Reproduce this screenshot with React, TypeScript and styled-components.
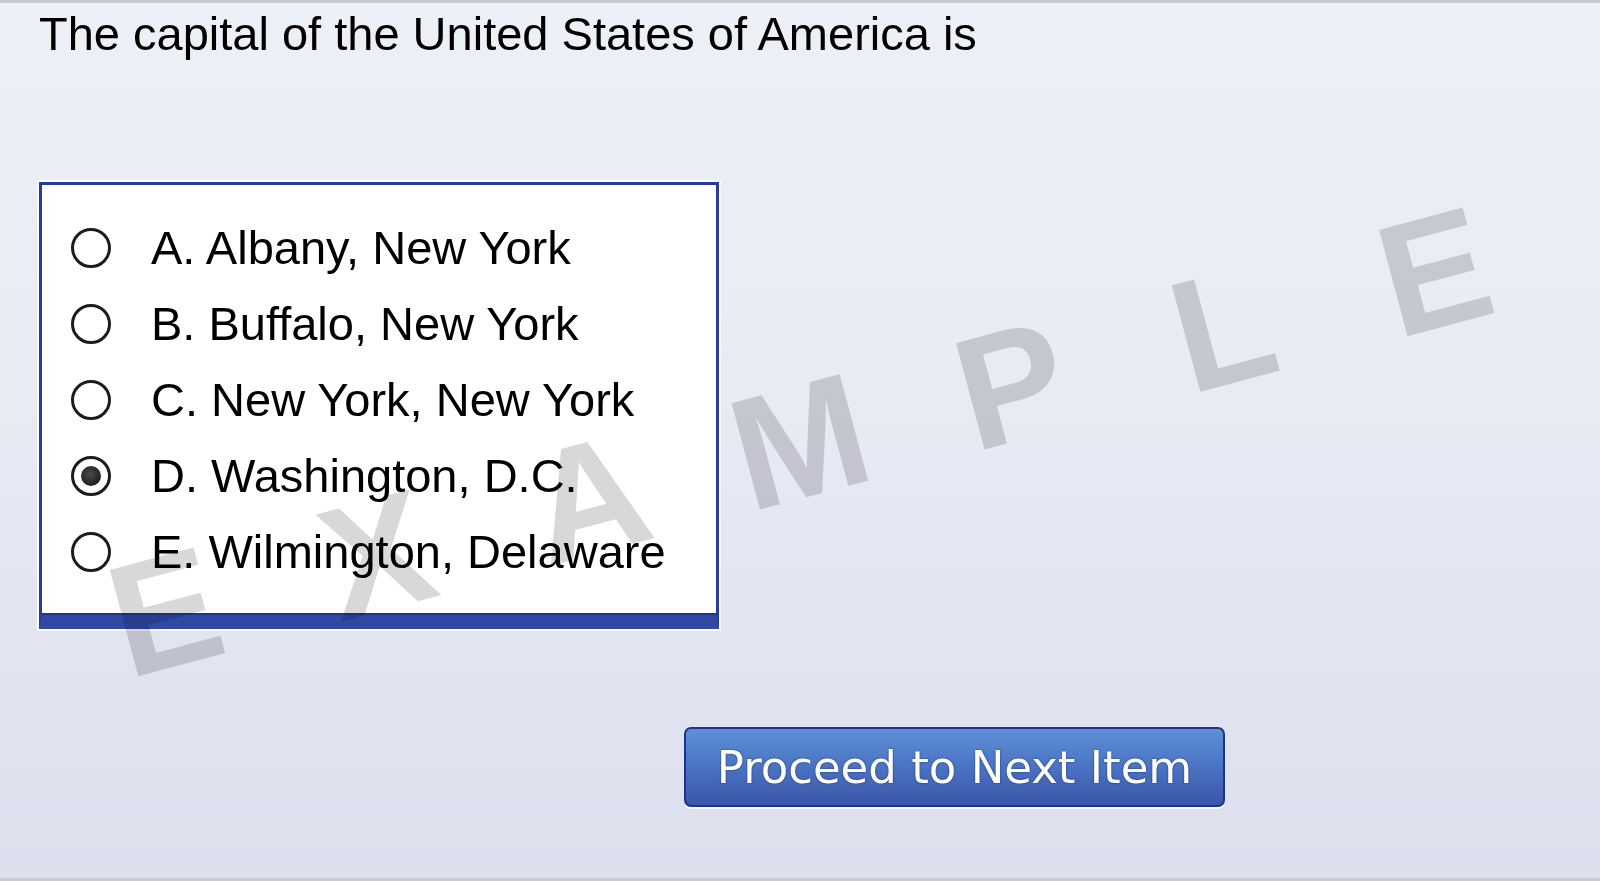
import React from "react";
import styled, { createGlobalStyle } from "styled-components";

const GlobalStyle = createGlobalStyle`
  html, body {
    margin: 0;
    padding: 0;
  }
  body {
    background: #e4e7f2;
    font-family: "Liberation Sans", Arial, sans-serif;
  }
  * { box-sizing: border-box; }
`;

const Page = styled.div`
  position: relative;
  height: 881px;
  overflow: hidden;
  border-top: 3px solid #c8c8ca;
  border-bottom: 3px solid #cbcbcf;
  background: linear-gradient(180deg, #eef0f8 0%, #e8eaf4 45%, #dcdfed 100%);
  padding: 4px 0 0 39px;
`;

const Title = styled.h1`
  margin: 0;
  font-family: "Liberation Sans", Arial, sans-serif;
  font-weight: 400;
  font-size: 47px;
  line-height: 54px;
  color: #000;
`;

const ChoiceBox = styled.div`
  margin-top: 121px;
  width: 680px;
  background: #fff;
  border: 3px solid #283a9c;
  border-bottom: 14px solid #3049a3;
  box-shadow: 0 0 0 2px rgba(255, 255, 255, 0.85), inset 0 -2px 0 #1f3590;
  padding: 25px 0 25px 29px;
  display: flex;
  flex-direction: column;
`;

const Option = styled.label`
  display: flex;
  align-items: center;
  gap: 40px;
  height: 76px;
  font-family: "Liberation Sans", Arial, sans-serif;
  font-size: 47px;
  line-height: 76px;
  color: #000;
  cursor: pointer;
`;

const Radio = styled.input.attrs({ type: "radio" })`
  appearance: none;
  -webkit-appearance: none;
  margin: 0;
  flex: none;
  width: 40px;
  height: 40px;
  border-radius: 50%;
  border: 3px solid #1c1c1c;
  background: #fff;
  position: relative;
  cursor: pointer;

  &:checked::after {
    content: "";
    position: absolute;
    left: 50%;
    top: 50%;
    width: 20px;
    height: 20px;
    transform: translate(-50%, -50%);
    border-radius: 50%;
    background: radial-gradient(circle at 45% 40%, #4a4a4a 0%, #262626 60%, #111 100%);
  }
`;

const ButtonRow = styled.div`
  margin-top: 98px;
  padding-left: 645px;
`;

const NextButton = styled.button`
  width: 541px;
  height: 80px;
  border: 2px solid #1d3391;
  border-radius: 7px;
  background: linear-gradient(180deg, #5d90d6 0%, #4a73c2 50%, #3b56aa 100%);
  color: #fff;
  font-family: "DejaVu Sans", Verdana, sans-serif;
  font-size: 45px;
  line-height: 1;
  text-shadow: 0 0 2px rgba(10, 20, 80, 0.7);
  box-shadow: 0 2px 0 rgba(255, 255, 255, 0.8);
  cursor: pointer;
  padding: 0;
`;

const Watermark = styled.div`
  position: absolute;
  left: 800px;
  top: 439px;
  transform: translate(-50%, -50%) rotate(-15deg);
  display: flex;
  pointer-events: none;
  mix-blend-mode: multiply;
`;

const WatermarkLetter = styled.span`
  width: 219px;
  text-align: center;
  font-family: "Liberation Sans", Arial, sans-serif;
  font-weight: 700;
  font-size: 160px;
  line-height: 1;
  color: rgb(216, 216, 218);
`;

const options = [
  { id: "a", label: "A. Albany, New York" },
  { id: "b", label: "B. Buffalo, New York" },
  { id: "c", label: "C. New York, New York" },
  { id: "d", label: "D. Washington, D.C." },
  { id: "e", label: "E. Wilmington, Delaware" },
];

export default function App() {
  return (
    <>
      <GlobalStyle />
      <Page>
        <Title>The capital of the United States of America is</Title>
        <ChoiceBox role="radiogroup">
          {options.map((o) => (
            <Option key={o.id}>
              <Radio name="capital" value={o.id} defaultChecked={o.id === "d"} />
              <span>{o.label}</span>
            </Option>
          ))}
        </ChoiceBox>
        <ButtonRow>
          <NextButton type="button">Proceed to Next Item</NextButton>
        </ButtonRow>
        <Watermark aria-hidden="true">
          {"EXAMPLE".split("").map((ch, i) => (
            <WatermarkLetter key={i}>{ch}</WatermarkLetter>
          ))}
        </Watermark>
      </Page>
    </>
  );
}
